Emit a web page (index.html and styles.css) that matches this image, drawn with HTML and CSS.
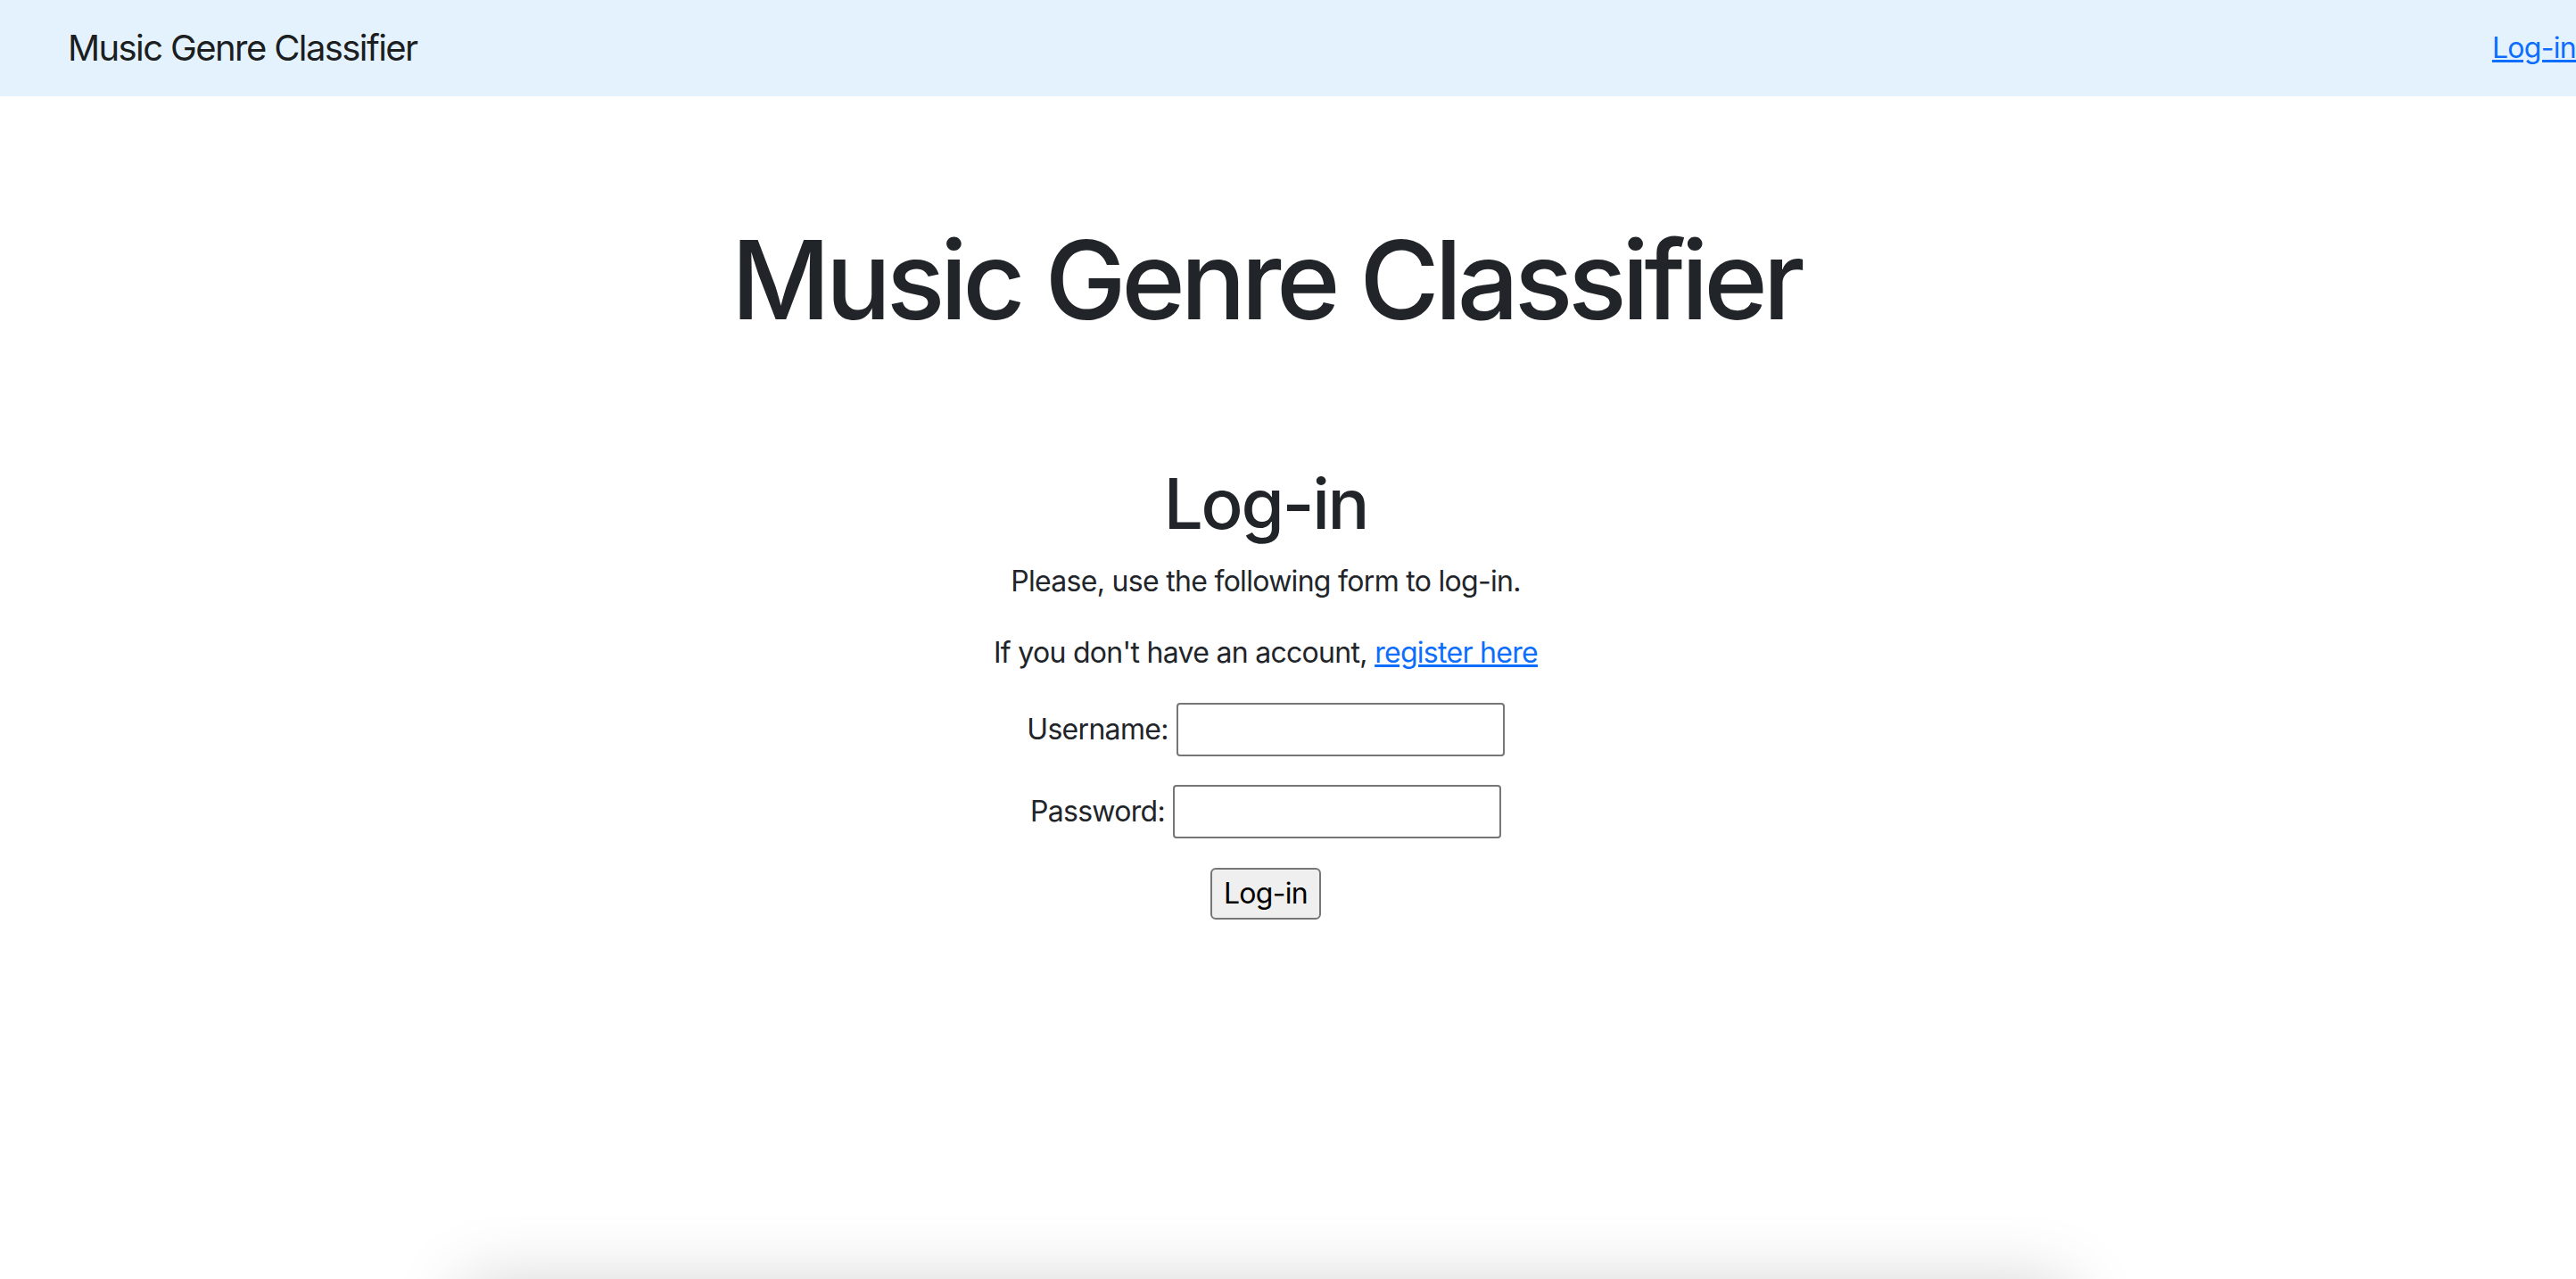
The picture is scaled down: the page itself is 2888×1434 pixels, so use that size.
FILE: index.html
```html
<!DOCTYPE html>
<html lang="en">
<head>
<meta charset="utf-8">
<title>Music Genre Classifier</title>
<link rel="stylesheet" href="styles.css">
</head>
<body>
<nav class="navbar">
  <a class="brand" href="#">Music Genre Classifier</a>
  <a class="nav-link" href="#">Log-in</a>
</nav>
<main class="content">
  <h1 class="title">Music Genre Classifier</h1>
  <h2 class="login-title">Log-in</h2>
  <p class="text">Please, use the following form to log-in.</p>
  <p class="text">If you don't have an account, <a class="link" href="#">register here</a></p>
  <form class="form">
    <p class="row"><label for="u">Username:</label> <input id="u" type="text" class="field"></p>
    <p class="row"><label for="p">Password:</label> <input id="p" type="password" class="field"></p>
    <p class="row"><button type="button" class="btn">Log-in</button></p>
  </form>
  <div class="footer"></div>
</main>
</body>
</html>
```
FILE: styles.css
```css
html, body {
  margin: 0;
  padding: 0;
  background: #fff;
  color: #212529;
  font-family: "Inter", "Liberation Sans", sans-serif;
  font-size: 32px;
  line-height: 1.5;
  letter-spacing: -0.7px;
  overflow: hidden;
}

.navbar {
  display: flex;
  align-items: center;
  justify-content: space-between;
  height: 108px;
  padding: 0 0 0 76px;
  background: #e3f2fd;
}

.brand {
  font-size: 40px;
  letter-spacing: -1.6px;
  color: rgba(0, 0, 0, 0.9);
  text-decoration: none;
  line-height: 1.5;
}

.nav-link {
  font-size: 32px;
  color: #0d6efd;
  text-decoration: underline;
}

.content {
  width: 2838px;
  text-align: center;
  padding-top: 133px;
}

.title {
  margin: 0 0 131px;
  font-size: 122px;
  letter-spacing: -5.4px;
  font-weight: 500;
  line-height: 1.2;
}

.login-title {
  margin: 0 0 16px;
  font-size: 78px;
  letter-spacing: -2.3px;
  font-weight: 500;
  line-height: 1.2;
}

.text {
  margin: 0 0 32px;
}

.link {
  color: #0d6efd;
}

.form {
  margin: 0;
}

.row {
  margin: 0 0 32px;
  display: flex;
  justify-content: center;
  align-items: center;
  gap: 9px;
  height: 60px;
}

.field {
  box-sizing: border-box;
  width: 368px;
  height: 60px;
  border: 2px solid #767676;
  border-radius: 4px;
  background: #fff;
  font: inherit;
  margin: 0;
  padding: 2px 4px;
}

.btn {
  box-sizing: border-box;
  height: 58px;
  padding: 0 13px;
  border: 2px solid #767676;
  border-radius: 6px;
  background: #efefef;
  color: #000;
  font: inherit;
  letter-spacing: -0.7px;
  line-height: 1;
}

.footer {
  margin: 407px auto 0;
  width: 1800px;
  height: 200px;
  background: #fff;
  box-shadow: 0 0 80px rgba(0, 0, 0, 0.18);
}
```
